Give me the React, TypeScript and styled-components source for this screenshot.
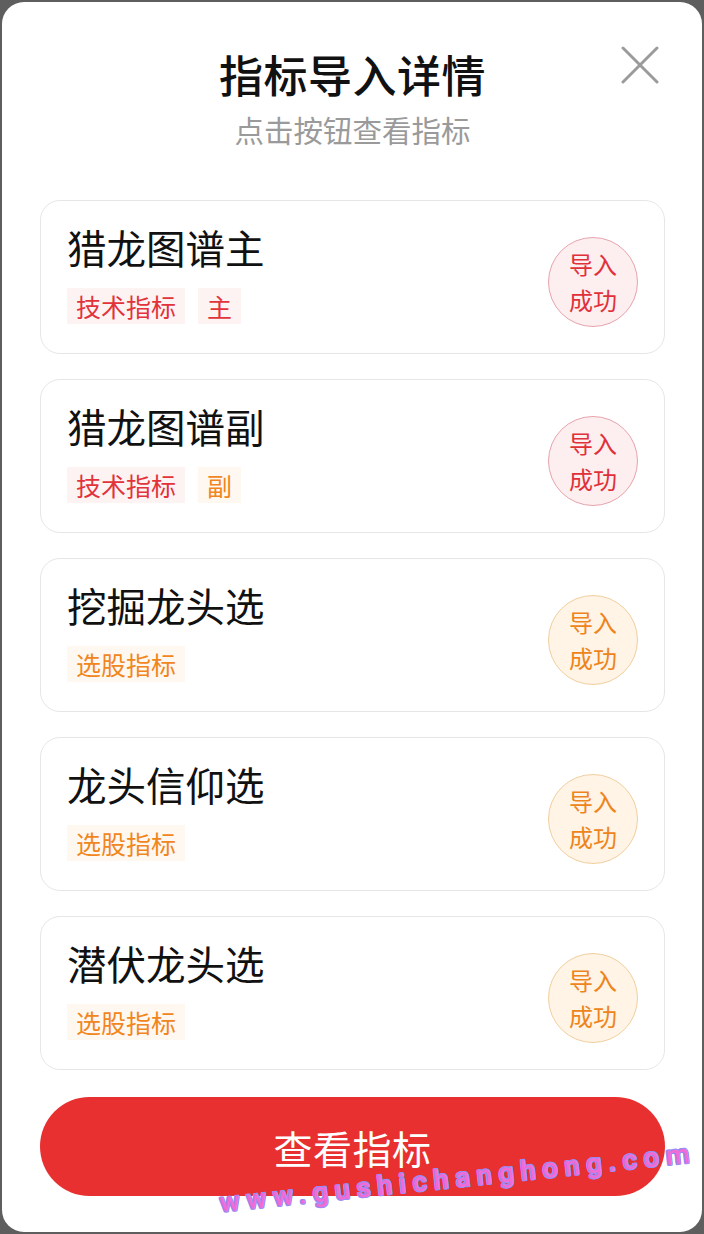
import React from "react";
import styled, { createGlobalStyle } from "styled-components";

const Global = createGlobalStyle`
  html, body { margin: 0; padding: 0; background: #5e5e5e; }
  body { font-family: "Noto Sans CJK SC", "Noto Sans", sans-serif; }
  #root { padding: 2px; box-sizing: border-box; width: 704px; height: 1234px; }
`;

const Modal = styled.div`
  position: relative;
  width: 700px;
  height: 1230px;
  background: #ffffff;
  border-radius: 22px;
  box-sizing: border-box;
  padding: 46px 37px 36px 38px;
  display: flex;
  flex-direction: column;
  overflow: hidden;
`;

const Header = styled.div`
  display: flex;
  flex-direction: column;
  align-items: center;
  gap: 9px;
  margin-bottom: 51px;
`;

const Title = styled.div`
  font-size: 44px;
  line-height: 52px;
  font-weight: 500;
  color: #111;
  letter-spacing: 0.5px;
`;

const Subtitle = styled.div`
  font-size: 29.5px;
  line-height: 40px;
  color: #9a9a9a;
`;

const Close = styled.button`
  position: absolute;
  top: 44px;
  right: 43px;
  width: 38px;
  height: 38px;
  padding: 0;
  border: none;
  background: transparent;
`;

const List = styled.div`
  display: flex;
  flex-direction: column;
  gap: 25px;
`;

const Card = styled.div`
  display: flex;
  align-items: center;
  justify-content: space-between;
  border: 1px solid #e6e6e6;
  border-radius: 20px;
  padding: 20px 26px 27px 26px;
  height: 154px;
  box-sizing: border-box;
`;

const Info = styled.div`
  display: flex;
  flex-direction: column;
  gap: 17px;
`;

const Name = styled.div`
  font-size: 39.5px;
  line-height: 48px;
  color: #111;
`;

const Tags = styled.div`
  display: flex;
  gap: 13px;
`;

const Tag = styled.span<{ $tone: "red" | "orange" }>`
  display: inline-flex;
  align-items: center;
  height: 36px;
  padding: 0 9px;
  font-size: 25px;
  color: ${(p) => (p.$tone === "red" ? "#e2333b" : "#f0861d")};
  background: ${(p) => (p.$tone === "red" ? "#fdf3f3" : "#fff8f0")};
`;

const Stamp = styled.div<{ $tone: "red" | "orange" }>`
  width: 88px;
  height: 88px;
  margin-top: 16px;
  border-radius: 50%;
  border: 1px solid ${(p) => (p.$tone === "red" ? "#e6a3ad" : "#f0cf9e")};
  background: ${(p) => (p.$tone === "red" ? "#fdeeef" : "#fff4e6")};
  color: ${(p) => (p.$tone === "red" ? "#e0313a" : "#ee841c")};
  display: flex;
  flex-direction: column;
  align-items: center;
  justify-content: center;
  font-size: 24px;
  line-height: 36px;
  flex-shrink: 0;
`;

const Button = styled.button`
  margin-top: 27px;
  height: 99px;
  border: none;
  border-radius: 50px;
  background: #e83031;
  color: #fff;
  font-family: "Noto Sans CJK SC", sans-serif;
  font-size: 39px;
  letter-spacing: 0.5px;
`;

const Watermark = styled.div`
  position: absolute;
  left: 219px;
  top: 1188px;
  font-family: Roboto, "DejaVu Sans", sans-serif;
  font-size: 27px;
  line-height: 26px;
  font-weight: 500;
  letter-spacing: 6.9px;
  color: #f16bd6;
  text-shadow: 1px 0 0 #9a8cf6, -1px 0 0 #9a8cf6, 0 1px 0 #9a8cf6, 0 -1px 0 #9a8cf6,
    1px 1px 0 #9a8cf6, -1px -1px 0 #9a8cf6, 1px -1px 0 #9a8cf6, -1px 1px 0 #9a8cf6;
  transform: rotate(-6deg);
  transform-origin: left bottom;
  white-space: nowrap;
  pointer-events: none;
`;

type Tone = "red" | "orange";
type Item = {
  name: string;
  tags: { label: string; tone: Tone }[];
  tone: Tone;
};

const items: Item[] = [
  { name: "猎龙图谱主", tags: [{ label: "技术指标", tone: "red" }, { label: "主", tone: "red" }], tone: "red" },
  { name: "猎龙图谱副", tags: [{ label: "技术指标", tone: "red" }, { label: "副", tone: "orange" }], tone: "red" },
  { name: "挖掘龙头选", tags: [{ label: "选股指标", tone: "orange" }], tone: "orange" },
  { name: "龙头信仰选", tags: [{ label: "选股指标", tone: "orange" }], tone: "orange" },
  { name: "潜伏龙头选", tags: [{ label: "选股指标", tone: "orange" }], tone: "orange" },
];

export default function App() {
  return (
    <>
      <Global />
      <Modal>
        <Header>
          <Title>指标导入详情</Title>
          <Subtitle>点击按钮查看指标</Subtitle>
        </Header>
        <Close aria-label="关闭">
          <svg width="38" height="38" viewBox="0 0 38 38">
            <path d="M2 2 L36 36 M36 2 L2 36" stroke="#9b9b9b" strokeWidth="3" strokeLinecap="round" />
          </svg>
        </Close>
        <List>
          {items.map((it) => (
            <Card key={it.name}>
              <Info>
                <Name>{it.name}</Name>
                <Tags>
                  {it.tags.map((t) => (
                    <Tag key={t.label} $tone={t.tone}>
                      {t.label}
                    </Tag>
                  ))}
                </Tags>
              </Info>
              <Stamp $tone={it.tone}>
                <span>导入</span>
                <span>成功</span>
              </Stamp>
            </Card>
          ))}
        </List>
        <Button>查看指标</Button>
        <Watermark>www.gushichanghong.com</Watermark>
      </Modal>
    </>
  );
}
